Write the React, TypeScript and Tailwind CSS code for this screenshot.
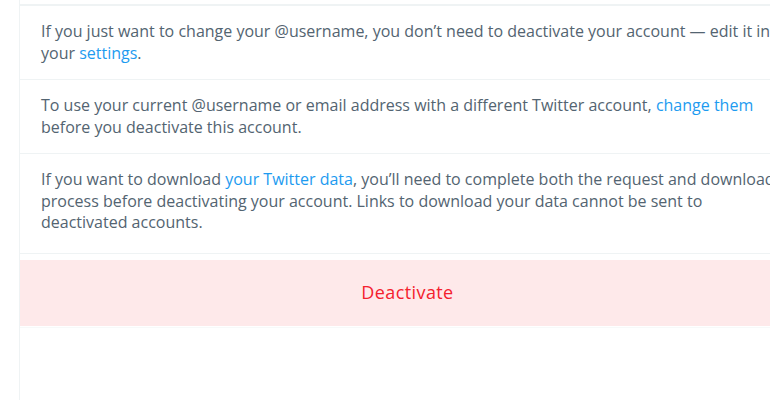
import React from "react";

const Row = ({ children, last }: { children: React.ReactNode; last?: boolean }) => (
  <div
    className={
      "border-b border-[#eff3f4] pl-[21px] " + (last ? "pt-[15px] pb-[19px]" : "py-[15px]")
    }
  >
    <p className="w-[741px] text-[16px] leading-[21.5px] text-[#536471]">{children}</p>
  </div>
);

const Link = ({ children }: { children: React.ReactNode }) => (
  <a href="#" className="text-[#1d9bf0]">
    {children}
  </a>
);

export default function App() {
  return (
    <div
      className="h-[400px] w-[770px] overflow-hidden bg-white"
      style={{ fontFamily: '"Open Sans", "Noto Sans", sans-serif' }}
    >
      <div className="ml-[19px] h-full w-[776px] border-l border-[#eff3f4]">
        <div className="h-[6px] border-b-[2px] border-[#eff3f4]" />
        <Row>
          If you just want to change your @username, you don’t need to deactivate your account — edit
          it in your <Link>settings</Link>.
        </Row>
        <Row>
          To use your current @username or email address with a different Twitter account,{" "}
          <Link>change them</Link> before you deactivate this account.
        </Row>
        <Row last>
          If you want to download <Link>your Twitter data</Link>, you’ll need to complete both the
          request and download process before deactivating your account. Links to download your data
          cannot be sent to deactivated accounts.
        </Row>
        <div className="pt-[6px]">
          <button className="flex h-[66px] w-full items-center justify-center bg-[#fee9ea] text-[18px] tracking-[0.4px] text-[#f4212e]">
            Deactivate
          </button>
        </div>
        <div className="h-[2px] border-b border-[#f7f9f9]" />
      </div>
    </div>
  );
}
